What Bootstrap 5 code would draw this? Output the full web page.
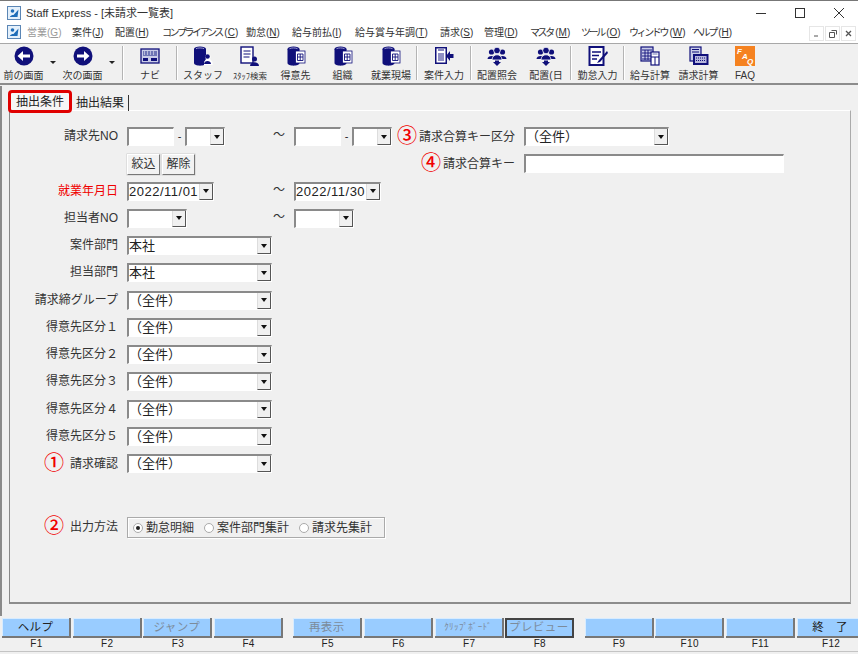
<!DOCTYPE html>
<html lang="ja"><head><meta charset="utf-8"><title>Staff Express</title>
<link href="https://cdn.jsdelivr.net/npm/bootstrap@5.3.0/dist/css/bootstrap.min.css" rel="stylesheet">
<style>
html,body{margin:0;background:#f0f0f0}
body{font-family:"Liberation Sans","Noto Sans CJK JP",sans-serif;font-size:11px;line-height:1;color:#222}
.app{width:858px;height:654px;overflow:hidden;display:flex;flex-direction:column;background:#f0f0f0;border-top:1px solid #777;position:relative}
.titlebar{height:24px;background:#fff;padding-left:7px;color:#333;flex:none}
.titlebar .ttl{margin-left:5px;font-size:11px}
.winctl{margin-left:auto}
.winctl span{width:39px;height:24px;display:flex;align-items:center;justify-content:center}
.menubar{height:19px;background:#fff;padding-left:7px;border-bottom:1px solid #a8a8a8;position:relative;flex:none}
.menubar .mi{position:absolute;top:3px;font-size:10px;white-space:nowrap;color:#333}
.menubar .mi.dis{color:#999}
.menubar .kn{letter-spacing:-2.4px;margin-right:2.4px}
.mdi{position:absolute;left:809px;top:1px;display:flex;gap:1px}
.mdi span{width:15px;height:15px;background:#fff;border:1px solid #e6e6e6;display:flex;align-items:center;justify-content:center}
.toolbar{height:41px;flex:none;border-bottom:2px solid #8c8c8c;background:#f0f0f0}
.tb{height:38px;display:flex;flex-direction:column;align-items:center;justify-content:flex-start;padding-top:2px;font-size:10px;color:#333;white-space:nowrap;flex:none}
.tb svg{height:20px;width:20px;margin-bottom:4px;display:block}
.tb span{line-height:12px}
.sep{width:2px;height:34px;margin-top:2px;background:#b4b4b4;border-right:1px solid #fff;flex:none}
.drop{width:12px;flex:none;padding-top:17px}
.drop i{display:block;width:0;height:0;border:3px solid transparent;border-top:3px solid #222;margin-left:3px}
.tabstrip{height:25px;flex:none;padding:5px 0 0 8px;position:relative}
.tabx{font-size:12px;height:18px;display:flex;align-items:center;color:#222;flex:none}
.tab-on{border:3px solid #e00000;border-radius:4px;height:23px;width:64px;justify-content:center;background:#f6f6f6;position:relative;z-index:1}
.tab-off{width:53px;margin-left:4px;border-right:1px solid #333;height:16px;margin-top:5px}
.panel{margin-left:9px;margin-right:7px;height:494px;flex:none;border-top:1px solid #fff;border-left:1px solid #888;border-bottom:2px solid #8c8c8c;border-right:1px solid #aaa;padding:16px 0 0 0}
.rowf{height:27.25px;display:flex;align-items:flex-start;flex:none}
.lbl{width:108px;text-align:right;font-size:12px;line-height:19px;color:#333;flex:none;white-space:nowrap;margin-right:9px}
.lbl.req{color:#f00000}
.num{color:#f00000;font-size:20px;line-height:18px;margin-right:2px;font-weight:500;vertical-align:-2px}
.num.far{margin-right:6px}
.inp{height:19px;background:#fff;border:1px solid #fff;border-top:2px solid #8a8a8a;border-left:2px solid #8a8a8a;flex:none}
.cbo{height:19px;background:#fff;border:1px solid #fff;border-top:2px solid #8a8a8a;border-left:2px solid #8a8a8a;display:flex;align-items:stretch;flex:none;font-size:13px;color:#222;overflow:hidden}
.cbo .val{flex:1;line-height:16px;white-space:nowrap}
.cbo .arw{width:14px;flex:none;background:#f0f0f0;border-right:1px solid #555;border-bottom:1px solid #555;border-left:1px solid #ddd;display:flex;align-items:center;justify-content:center}
.arw i{display:block;width:0;height:0;border:3.5px solid transparent;border-top:4px solid #111;border-bottom:0}
.w145{width:145px}.w40{width:40px}.w47{width:47px}.w60{width:60px}.w87{width:87px}
.date{font-size:13px;letter-spacing:.5px}
.dash{width:11px;text-align:center;line-height:18px;flex:none;font-size:11px}
.tilde{line-height:17px;font-size:12px;flex:none;color:#333}
.t1{width:69px;padding-left:48px}.t2{width:80px;padding-left:59px}.t3{width:107px;padding-left:86px}
.sbtn{height:21px;width:33px;padding:0;border-radius:0;font-size:12px;line-height:19px;color:#333;background:#f2f2f2;border:1px solid #fff;border-right:1px solid #777;border-bottom:1px solid #777;margin-right:2px;flex:none;box-shadow:0 0 0 .5px #ccc}
.sbtn:hover{background:#f2f2f2;color:#333}
.spacer-m{height:36px}
.grp{width:258px;height:21px;border:1px solid #aaa;flex:none;display:flex;align-items:center;padding-left:5px;font-size:12px;color:#333;box-shadow:inset 1px 1px 0 #fff,1px 1px 0 #fff}
.rad{width:10px;height:10px;border-radius:50%;background:#fff;border:1px solid #aaa;display:inline-block;margin-right:3px;position:relative;flex:none}
.rad.on::after{content:"";position:absolute;left:2px;top:2px;width:4px;height:4px;border-radius:50%;background:#222}
.rad.nx{margin-left:10px}
.fbar{height:36px;flex:none;padding-left:2px;margin-top:14px}
.fk{width:69px;flex:none;margin-right:1.7px}
.fk.g{margin-right:10.2px}
.fk .btn{display:block;width:100%;height:20px;padding:0;border-radius:0;background:#99ccff;border:0;border-right:2px solid #777;border-bottom:2px solid #777;box-shadow:inset 1px 1px 0 #d8ecff;font-size:11.5px;line-height:18px;color:#222;letter-spacing:.4px}
.fk .btn.off{color:#7c8b9b;opacity:1}
.fk .btn.foc{outline:2px solid #444;outline-offset:-2px}
.fk .cap{text-align:center;font-size:10px;line-height:12px;color:#222;letter-spacing:.3px}
.edge{position:absolute;left:0;top:85px;width:2px;height:530px;background:#8a8a8a}
.fbot{position:absolute;left:0;right:0;top:650px;height:1px;background:#c4c4c4}
</style></head>
<body>
<svg width="0" height="0" class="d-none">
<defs>
<symbol id="app" viewBox="0 0 14 14"><rect x=".5" y=".5" width="13" height="13" fill="#e4f0fb" stroke="#5b86b5"/><path d="M2.500 11.500c1-2 2.500-2.500 4-2.500l5-5.500-1 7.500H3z" fill="#1f6db8"/><circle cx="5.500" cy="5" r="1.800" fill="#1f6db8"/></symbol>
<symbol id="back" viewBox="0 0 20 20"><circle cx="10" cy="10" r="9.500" fill="#10107a"/><path d="M16 8.500H9V5L3.500 10 9 15v-3.500h7z" fill="#fff"/></symbol>
<symbol id="fwd" viewBox="0 0 20 20"><circle cx="10" cy="10" r="9.500" fill="#10107a"/><path d="M4 8.500h7V5l5.500 5-5.500 5v-3.500H4z" fill="#fff"/></symbol>
<symbol id="navi" viewBox="0 0 20 20"><rect x="1" y="3" width="18" height="14" fill="#c9cce8" stroke="#10107a" stroke-width="1.300"/><path d="M3 5h14v5H3z" fill="#6f76b6"/><path d="M4 6h1M7 6h1M10 6h1M13 6h1M4 8h1M7 8h1M10 8h1M13 8h1" stroke="#fff"/><path d="M3 12h5v3H3zM11 12h6v3h-6z" fill="#10107a"/></symbol>
<symbol id="dbp" viewBox="0 0 20 20"><ellipse cx="7" cy="3" rx="6" ry="2.500" fill="#10107a"/><path d="M1 3v14c0 3.500 12 3.500 12 0V3z" fill="#10107a"/><path d="M3 2.700c1.500-1 6.500-1 8 0" stroke="#9a9ad0" fill="none"/><path d="M11 19v-3l2-3c-1-1-1-5 2-5s3 4 2 5l2.500 3v3z" fill="#fff"/><circle cx="14.500" cy="10.500" r="2.300" fill="#10107a"/><path d="M11 18c0-4 7-4 7 0z" fill="#10107a"/></symbol>
<symbol id="doc" viewBox="0 0 20 20"><rect x="1" y="1" width="12" height="16" fill="#fff" stroke="#10107a" stroke-width="1.400"/><path d="M3.500 5h7M3.500 8h7M3.500 11h6" stroke="#10107a"/><circle cx="14.500" cy="13" r="2.500" fill="#10107a"/><path d="M10 20c0-5 9-5 9 0z" fill="#10107a"/></symbol>
<symbol id="dbg" viewBox="0 0 20 20"><ellipse cx="7.500" cy="3" rx="6" ry="2.500" fill="#10107a"/><path d="M1.500 3v14c0 3.500 12 3.500 12 0V3z" fill="#10107a"/><path d="M3.500 2.700c1.500-1 6.500-1 8 0" stroke="#9a9ad0" fill="none"/><rect x="9.500" y="5" width="9.500" height="12" fill="#fff" stroke="#10107a" stroke-width=".8"/><path d="M11.500 8h5.500v6.500h-5.500zM14.200 8v6.500M11.500 11h5.500" fill="none" stroke="#10107a" stroke-width=".9"/></symbol>
<symbol id="inp" viewBox="0 0 20 20"><rect x="1" y="1" width="12" height="17" fill="#10107a"/><rect x="2.500" y="2.500" width="9" height="14" fill="#fff"/><rect x="4" y="7" width="6" height="8" fill="#8f8fc4"/><path d="M4 4h6" stroke="#10107a"/><path d="M19.500 8h-3.500V5l-4 5 4 5v-3h3.500z" fill="#10107a"/></symbol>
<symbol id="ppl" viewBox="0 0 20 20"><circle cx="4.500" cy="6" r="2.600" fill="#10107a"/><circle cx="15.500" cy="6" r="2.600" fill="#10107a"/><path d="M.5 13c0-4 8-4 8 0zM11.500 13c0-4 8-4 8 0z" fill="#10107a"/><circle cx="10" cy="4.500" r="3.300" fill="#10107a" stroke="#fff" stroke-width=".8"/><path d="M5 14c0-7 10-7 10 0z" fill="#10107a" stroke="#fff" stroke-width=".8"/><path d="M8 14.500h4V16h2l-4 4-4-4h2z" fill="#10107a"/></symbol>
<symbol id="edit" viewBox="0 0 20 20"><rect x="1.500" y="1" width="14" height="18" fill="#fff" stroke="#10107a" stroke-width="2"/><path d="M4 6h9M4 9.500h7M4 13h5" stroke="#10107a" stroke-width="1.600"/><path d="M19 5l-8 9-2 3 3-1 8-9z" fill="#10107a"/></symbol>
<symbol id="calc" viewBox="0 0 20 20"><rect x="1" y="1" width="12" height="14" fill="#c9cce8" stroke="#10107a" stroke-width="1.200"/><path d="M2 4h10M2 7h10M2 10h10M2 13h10M5 4v10M8 4v10" stroke="#10107a" stroke-width=".9"/><rect x="11" y="6" width="8" height="13" fill="#fff" stroke="#10107a" stroke-width="1.200"/><path d="M11 11h8M15 11v8" stroke="#10107a"/><path d="M12.500 8h5" stroke="#6f76b6"/></symbol>
<symbol id="calc2" viewBox="0 0 20 20"><rect x="1" y="1" width="11" height="14" fill="#c9cce8" stroke="#10107a" stroke-width="1.200"/><path d="M3 3.500h7M3 6h7" stroke="#10107a"/><rect x="4" y="8" width="15.500" height="11" fill="#10107a"/><rect x="6" y="10" width="11.500" height="7" fill="#b7b7dd"/><path d="M7 12h9M7 14.500h9" stroke="#10107a" stroke-dasharray="1 1"/></symbol>
</defs></svg>
<div class="app">
  <div class="edge"></div>
  <div class="titlebar d-flex align-items-center">
    <svg width="14" height="14"><use href="#app"/></svg>
    <span class="ttl">Staff Express - [未請求一覧表]</span>
    <div class="winctl d-flex">
      <span><svg width="10" height="10"><path d="M0 5.500h10" stroke="#333"/></svg></span>
      <span><svg width="10" height="10"><rect x=".5" y=".5" width="9" height="9" fill="none" stroke="#333"/></svg></span>
      <span><svg width="10" height="10"><path d="M0 0l10 10M10 0L0 10" stroke="#333"/></svg></span>
    </div>
  </div>
  <nav class="menubar">
    <svg width="14" height="14" class="d-block mt-0"><use href="#app"/></svg>
    <span class="mi dis" style="left:27px">営業(<u>G</u>)</span>
    <span class="mi" style="left:72px">案件(<u>J</u>)</span>
    <span class="mi" style="left:115px">配置(<u>H</u>)</span>
    <span class="mi" style="left:162px"><span class="kn">コンプライアンス</span>(<u>C</u>)</span>
    <span class="mi" style="left:246px">勤怠(<u>N</u>)</span>
    <span class="mi" style="left:292px">給与前払(<u>I</u>)</span>
    <span class="mi" style="left:355px">給与賞与年調(<u>T</u>)</span>
    <span class="mi" style="left:440px">請求(<u>S</u>)</span>
    <span class="mi" style="left:484px">管理(<u>D</u>)</span>
    <span class="mi" style="left:530px"><span class="kn">マスタ</span>(<u>M</u>)</span>
    <span class="mi" style="left:581px"><span class="kn">ツール</span>(<u>O</u>)</span>
    <span class="mi" style="left:629px"><span class="kn">ウィンドウ</span>(<u>W</u>)</span>
    <span class="mi" style="left:693px"><span class="kn">ヘルプ</span>(<u>H</u>)</span>
    <div class="mdi">
      <span><svg width="7" height="7"><path d="M1 6h4" stroke="#555"/></svg></span>
      <span><svg width="8" height="8"><path d="M2.500.5h5v4M.5 2.500h5v5h-5z" fill="none" stroke="#555"/></svg></span>
      <span><svg width="7" height="7"><path d="M1 1l5 5M6 1L1 6" stroke="#555" stroke-width="1.300"/></svg></span>
    </div>
  </nav>
  <div class="toolbar d-flex">
    <div class="tb" style="width:47px"><svg><use href="#back"/></svg><span>前の画面</span></div>
    <div class="drop"><i></i></div>
    <div class="tb" style="width:47px"><svg><use href="#fwd"/></svg><span>次の画面</span></div>
    <div class="drop"><i></i></div>
    <div class="sep ms-1"></div>
    <div class="tb" style="width:52px"><svg><use href="#navi"/></svg><span>ナビ</span></div>
    <div class="sep"></div>
    <div class="tb" style="width:50px"><svg><use href="#dbp"/></svg><span>スタッフ</span></div>
    <div class="tb" style="width:44px"><svg><use href="#doc"/></svg><span style="font-size:8.5px">ｽﾀｯﾌ検索</span></div>
    <div class="tb" style="width:47px"><svg><use href="#dbg"/></svg><span>得意先</span></div>
    <div class="tb" style="width:47px"><svg><use href="#dbg"/></svg><span>組織</span></div>
    <div class="tb" style="width:50px"><svg><use href="#dbg"/></svg><span>就業現場</span></div>
    <div class="sep"></div>
    <div class="tb" style="width:52px"><svg><use href="#inp"/></svg><span>案件入力</span></div>
    <div class="sep"></div>
    <div class="tb" style="width:50px"><svg><use href="#ppl"/></svg><span>配置照会</span></div>
    <div class="tb" style="width:48px"><svg><use href="#ppl"/></svg><span>配置(日</span></div>
    <div class="sep"></div>
    <div class="tb" style="width:51px"><svg><use href="#edit"/></svg><span>勤怠入力</span></div>
    <div class="sep"></div>
    <div class="tb" style="width:50px"><svg><use href="#calc"/></svg><span>給与計算</span></div>
    <div class="tb" style="width:47px"><svg><use href="#calc2"/></svg><span>請求計算</span></div>
    <div class="tb" style="width:46px"><svg viewBox="0 0 20 20"><rect width="20" height="20" fill="#f58220"/><text x="2" y="8" font-size="8" font-weight="700" font-style="italic" fill="#fff" font-family="Liberation Sans">F</text><text x="7" y="13" font-size="8" font-weight="700" font-style="italic" fill="#fff" font-family="Liberation Sans">A</text><text x="12" y="18" font-size="8" font-weight="700" font-style="italic" fill="#fff" font-family="Liberation Sans">Q</text></svg><span>FAQ</span></div>
  </div>
  <div class="tabstrip d-flex">
    <div class="tabx tab-on">抽出条件</div>
    <div class="tabx tab-off">抽出結果</div>
  </div>
  <main class="panel">
    <div class="rowf">
      <div class="lbl">請求先NO</div>
      <div class="inp w47"></div><div class="dash">-</div><div class="cbo w40"><span class="val"></span><span class="arw"><i></i></span></div>
      <div class="tilde t1">～</div>
      <div class="inp w47"></div><div class="dash">-</div><div class="cbo w40"><span class="val"></span><span class="arw"><i></i></span></div>
      <div class="lbl" style="width:123px"><span class="num">③</span>請求合算キー区分</div>
      <div class="cbo w145"><span class="val">（全件）</span><span class="arw"><i></i></span></div>
    </div>
    <div class="rowf">
      <div class="lbl"></div>
      <button class="btn sbtn">絞込</button><button class="btn sbtn">解除</button>
      <div class="lbl" style="width:318px"><span class="num">④</span>請求合算キー</div>
      <div class="inp" style="width:260px"></div>
    </div>
    <div class="rowf">
      <div class="lbl req">就業年月日</div>
      <div class="cbo date w87"><span class="val">2022/11/01</span><span class="arw"><i></i></span></div>
      <div class="tilde t2">～</div>
      <div class="cbo date w87"><span class="val">2022/11/30</span><span class="arw"><i></i></span></div>
    </div>
    <div class="rowf">
      <div class="lbl">担当者NO</div>
      <div class="cbo w60"><span class="val"></span><span class="arw"><i></i></span></div>
      <div class="tilde t3">～</div>
      <div class="cbo w60"><span class="val"></span><span class="arw"><i></i></span></div>
    </div>
    <div class="rowf"><div class="lbl">案件部門</div><div class="cbo w145"><span class="val">本社</span><span class="arw"><i></i></span></div></div>
    <div class="rowf"><div class="lbl">担当部門</div><div class="cbo w145"><span class="val">本社</span><span class="arw"><i></i></span></div></div>
    <div class="rowf"><div class="lbl">請求締グループ</div><div class="cbo w145"><span class="val">（全件）</span><span class="arw"><i></i></span></div></div>
    <div class="rowf"><div class="lbl">得意先区分１</div><div class="cbo w145"><span class="val">（全件）</span><span class="arw"><i></i></span></div></div>
    <div class="rowf"><div class="lbl">得意先区分２</div><div class="cbo w145"><span class="val">（全件）</span><span class="arw"><i></i></span></div></div>
    <div class="rowf"><div class="lbl">得意先区分３</div><div class="cbo w145"><span class="val">（全件）</span><span class="arw"><i></i></span></div></div>
    <div class="rowf"><div class="lbl">得意先区分４</div><div class="cbo w145"><span class="val">（全件）</span><span class="arw"><i></i></span></div></div>
    <div class="rowf"><div class="lbl">得意先区分５</div><div class="cbo w145"><span class="val">（全件）</span><span class="arw"><i></i></span></div></div>
    <div class="rowf"><div class="lbl"><span class="num far">①</span>請求確認</div><div class="cbo w145"><span class="val">（全件）</span><span class="arw"><i></i></span></div></div>
    <div class="spacer-m"></div>
    <div class="rowf">
      <div class="lbl"><span class="num far">②</span>出力方法</div>
      <div class="grp"><span class="rad on"></span><span>勤怠明細</span><span class="rad nx"></span><span>案件部門集計</span><span class="rad nx"></span><span>請求先集計</span></div>
    </div>
  </main>
  <div class="fbar d-flex">
    <div class="fk"><button class="btn">ヘルプ</button><div class="cap">F1</div></div>
    <div class="fk"><button class="btn">&nbsp;</button><div class="cap">F2</div></div>
    <div class="fk"><button class="btn off">ジャンプ</button><div class="cap">F3</div></div>
    <div class="fk g"><button class="btn">&nbsp;</button><div class="cap">F4</div></div>
    <div class="fk"><button class="btn off">再表示</button><div class="cap">F5</div></div>
    <div class="fk"><button class="btn">&nbsp;</button><div class="cap">F6</div></div>
    <div class="fk"><button class="btn off" style="font-size:9px">ｸﾘｯﾌﾟﾎﾞｰﾄﾞ</button><div class="cap">F7</div></div>
    <div class="fk g"><button class="btn off foc">プレビュー</button><div class="cap">F8</div></div>
    <div class="fk"><button class="btn">&nbsp;</button><div class="cap">F9</div></div>
    <div class="fk"><button class="btn">&nbsp;</button><div class="cap">F10</div></div>
    <div class="fk"><button class="btn">&nbsp;</button><div class="cap">F11</div></div>
    <div class="fk"><button class="btn">終　了</button><div class="cap">F12</div></div>
  </div>
  <div class="fbot"></div>
</div>
<script src="https://cdn.jsdelivr.net/npm/bootstrap@5.3.0/dist/js/bootstrap.bundle.min.js"></script>
</body></html>
